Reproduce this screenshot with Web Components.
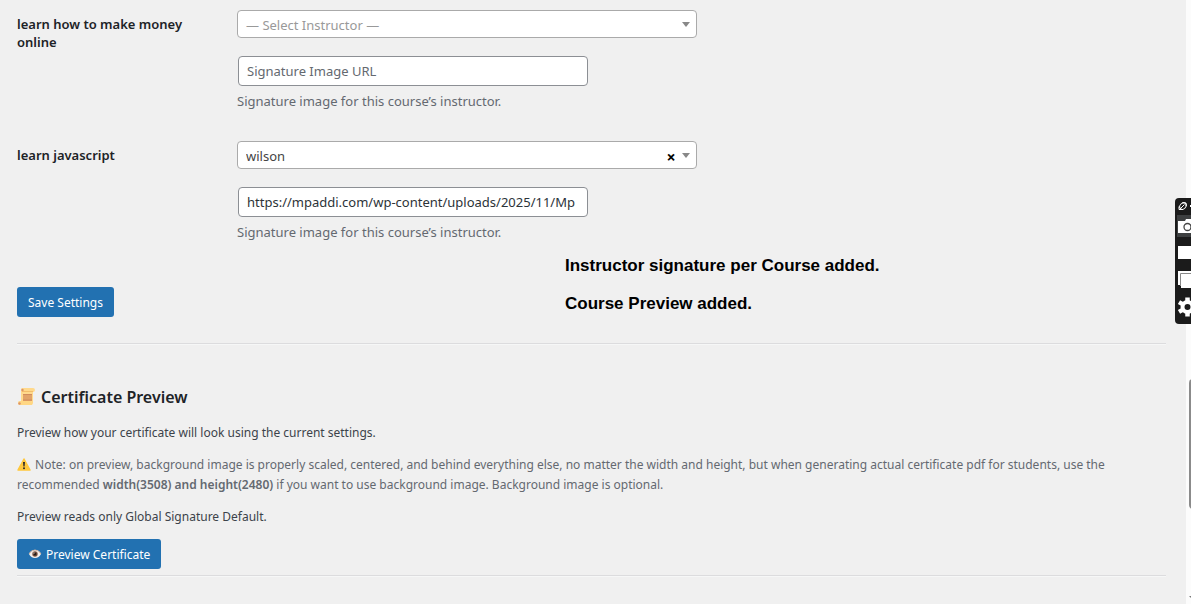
<!DOCTYPE html>
<html lang="en">
<head>
<meta charset="utf-8">
<meta name="viewport" content="width=device-width, initial-scale=1">
<title>Certificate Settings</title>
<style>
  html, body { margin: 0; min-height: 100%; }
  body { background: #f0f0f0; color: #3c434a; font: 13px/20px "Noto Sans", "Liberation Sans", sans-serif; }
</style>
</head>
<body>
<settings-page></settings-page>

<template id="settings-page">
  <style>
    :host { display: grid; grid-template-columns: minmax(0, 1fr) 5px; min-height: 100vh; position: relative; overflow: hidden; box-sizing: border-box; }
    main { padding: 10px 20px 28px 17px; }
    .actions { padding: 15px 0 26px; }
    hr { border: 0; border-top: 1px solid #dcdcde; border-bottom: 1px solid #f6f7f7; margin: 0; }
  </style>
  <main>
    <course-row course="learn how to make money online"></course-row>
    <course-row course="learn javascript" instructor="wilson" signature="https://mpaddi.com/wp-content/uploads/2025/11/Mp"></course-row>
    <div class="actions"><primary-button>Save Settings</primary-button></div>
    <hr>
    <certificate-preview></certificate-preview>
    <hr>
  </main>
  <page-scrollbar></page-scrollbar>
  <caption-notes></caption-notes>
  <capture-toolbar></capture-toolbar>
</template>

<template id="course-row">
  <style>
    :host { display: grid; grid-template-columns: 200px minmax(0, 1fr); column-gap: 20px; padding-bottom: 29px; }
    .name { padding: 5px 20px 0 0; font-size: 13px; font-weight: 600; line-height: 18px; color: #1d2327; }
    .picker { position: relative; width: 460px; max-width: 100%; height: 28px; margin-bottom: 18px; }
    select, input { box-sizing: border-box; font: inherit; font-size: 13px; background: #fff; border-radius: 4px; margin: 0; outline: 0; }
    select { display: block; appearance: none; width: 100%; height: 28px; border: 1px solid #aaa; padding: 2px 40px 0 8px; color: #444; }
    select.empty { color: #999; }
    .arrow { position: absolute; right: 7px; top: 12px; border: solid transparent; border-width: 5px 4px 0; border-top-color: #888; pointer-events: none; }
    .clear { position: absolute; right: 19px; top: 8px; width: 14px; height: 16px; padding: 0; border: 0; background: none; font: bold 16px/16px "Noto Sans", sans-serif; color: #000; }
    input { display: block; width: 350px; max-width: 100%; height: 30px; margin: 0 1px 5px; padding: 0 8px; border: 1px solid #8c8f94; color: #2c3338; }
    input::placeholder { color: #646970; opacity: 1; }
    p { margin: 0; font-size: 13px; line-height: 21px; color: #646970; }
  </style>
  <label class="name" for="instructor"></label>
  <div>
    <div class="picker">
      <select id="instructor"><option></option></select>
      <span class="arrow"></span>
    </div>
    <input id="signature" type="text" placeholder="Signature Image URL" aria-label="Signature Image URL" aria-describedby="hint">
    <p id="hint">Signature image for this course’s instructor.</p>
  </div>
</template>

<template id="primary-button">
  <style>
    :host { display: block; }
    button { display: inline-flex; align-items: center; box-sizing: border-box; height: 30px; padding: 2px 11px 0; border: 0; border-radius: 3px; background: #2271b1; color: #fff; font: inherit; font-size: 12px; white-space: nowrap; vertical-align: top; }
  </style>
  <button type="button"><slot></slot></button>
</template>

<template id="certificate-preview">
  <style>
    :host { display: block; padding: 41px 0 6px; font-size: 12px; }
    h2 { display: flex; align-items: center; gap: 5px; margin: 0 0 15px; font-size: 16px; line-height: 22px; font-weight: 600; color: #1d2327; }
    p { margin: 0 0 12px; line-height: 20px; }
    .note { color: #646970; }
    .note svg { vertical-align: -2px; margin-right: 1px; }
    .note strong { font-weight: 600; }
    svg { flex: none; }
    .eye { margin: 0 4px 2px 0; }
  </style>
  <h2>
    <svg width="19" height="18" viewBox="0 0 19 18" aria-hidden="true">
      <path d="M5 0h11q2 0 2 2t-2 2v11H4V2q0-2 1-2z" fill="#ffd98c"/>
      <path d="M5 3.500h11" stroke="#f3bd6a"/>
      <circle cx="5.500" cy="2" r="1.200" fill="#dc9468"/>
      <path d="M6 6h9v7H6z" fill="#e2a368"/>
      <path d="M6 6.500h9M6 12h9" stroke="#d18c5c"/>
      <path d="M2.500 13H13q1 0 1 1.200h2Q16 17 14 17H2.500q-1.500 0-1.500-2t1.500-2z" fill="#ffd784"/>
      <circle cx="2.500" cy="15.500" r="1.200" fill="#dc9468"/>
    </svg>
    Certificate Preview
  </h2>
  <p>Preview how your certificate will look using the current settings.</p>
  <p class="note"><svg width="14" height="13" viewBox="0 0 14 13" aria-hidden="true"><path d="M7 1 13 12H1z" fill="#ffc83d" stroke="#ffc83d" stroke-width="1.500" stroke-linejoin="round"/><path d="M6 4h2l-.4 4.500H6.400z" fill="#302c2b"/><circle cx="7" cy="10.300" r="1" fill="#302c2b"/></svg> Note: on preview, background image is properly scaled, centered, and behind everything else, no matter the width and height, but when generating actual certificate pdf for students, use the<br>recommended <strong>width(3508) and height(2480)</strong> if you want to use background image. Background image is optional.</p>
  <p>Preview reads only Global Signature Default.</p>
  <primary-button><svg class="eye" width="14" height="12" viewBox="0 0 14 12" aria-hidden="true"><path d="M1 6q2-4 6-4t6 4q-2 4-6 4T1 6z" fill="#f5efeb"/><path d="M1 6q2-4 6-4t6 4" fill="none" stroke="#d3b5a2"/><circle cx="7" cy="6" r="2.700" fill="#7d5540"/><circle cx="7" cy="6" r="1.500" fill="#241c1a"/><circle cx="6" cy="5" r=".6" fill="#fff"/></svg>Preview Certificate</primary-button>
</template>

<template id="page-scrollbar">
  <style>
    :host { display: block; position: relative; background: #fcfcfc; overflow: hidden; }
    .thumb { position: absolute; left: 3px; top: 379px; width: 8px; height: 130px; border-radius: 4px; background: #8b8b8b; }
    .down { position: absolute; left: 3px; top: 596px; border: solid transparent; border-width: 4px 4px 0; border-top-color: #777; }
  </style>
  <div class="thumb"></div><div class="down"></div>
</template>

<template id="caption-notes">
  <style>
    :host { position: absolute; left: 565px; top: 256px; font: bold 17px/20px "Liberation Sans", Arial, sans-serif; color: #000; white-space: nowrap; }
    p { margin: 0 0 18px; }
  </style>
  <p>Instructor signature per Course added.</p>
  <p>Course Preview added.</p>
</template>

<template id="capture-toolbar">
  <style>
    :host { position: absolute; right: 0; top: 198px; width: 16px; height: 126px; border-radius: 4px 0 0 4px; background: #1b1b1b; overflow: hidden; }
    svg { display: block; }
  </style>
  <svg width="16" height="126" viewBox="0 0 16 126" aria-hidden="true">
    <path d="M2 17h14v22H2z" fill="#3d3f40"/>
    <g fill="none" stroke="#fff"><ellipse cx="8" cy="8" rx="3.600" ry="2.800" transform="rotate(-45 8 8)"/><path d="M4 12 9.500 6.500M4 8.500v3M5 11.500h3M7 5h4v3"/></g>
    <path d="M15 7h1v2h-1z" fill="#fff"/>
    <path d="M3 23h7l1-2h5v14H3z" fill="#fff"/>
    <circle cx="12.500" cy="29" r="3.500" fill="#fff" stroke="#444" stroke-width="1.300"/>
    <path d="M3 48h13v13H3zM3 73h13v14H3z" fill="#fff"/>
    <path d="M16 75.500H5.500V88" fill="none" stroke="#888"/>
    <path d="M6 76h10v14H6z" fill="#fff"/>
    <circle cx="12.500" cy="109" r="5" fill="none" stroke="#fff" stroke-width="4"/>
    <g stroke="#fff" stroke-width="4.500"><path d="M12.500 99.500v4M12.500 114.500v4M4 104.100l3.500 2M4 113.900l3.500-2"/></g>
  </svg>
</template>

<script>
  class TemplateElement extends HTMLElement {
    constructor() {
      super();
      this.attachShadow({ mode: 'open' })
        .append(document.getElementById(this.localName).content.cloneNode(true));
    }
  }

  class CourseRow extends TemplateElement {
    connectedCallback() {
      const root = this.shadowRoot;
      const instructor = this.getAttribute('instructor');
      const select = root.querySelector('select');
      root.querySelector('label').textContent = this.getAttribute('course');
      select.options[0].textContent = instructor || '— Select Instructor —';
      select.classList.toggle('empty', !instructor);
      root.querySelector('input').value = this.getAttribute('signature') || '';
      if (instructor && !root.querySelector('.clear')) {
        const clear = document.createElement('button');
        clear.type = 'button';
        clear.className = 'clear';
        clear.textContent = '×';
        clear.setAttribute('aria-label', 'Remove instructor');
        root.querySelector('.picker').append(clear);
      }
    }
  }

  customElements.define('primary-button', class extends TemplateElement {});
  customElements.define('course-row', CourseRow);
  customElements.define('certificate-preview', class extends TemplateElement {});
  customElements.define('page-scrollbar', class extends TemplateElement {});
  customElements.define('caption-notes', class extends TemplateElement {});
  customElements.define('capture-toolbar', class extends TemplateElement {});
  customElements.define('settings-page', class extends TemplateElement {});
</script>
</body>
</html>
